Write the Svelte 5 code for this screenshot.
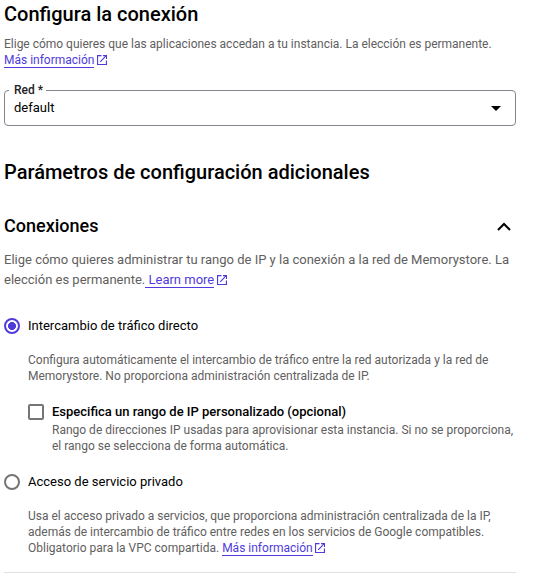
<script>
  const more = 'Más información';
</script>

{#snippet ext()}
  <svg class="ext" viewBox="0 0 10 10" width="10" height="10" fill="none" stroke="currentColor" stroke-width="1.15"><path d="M4.5 .55H.55V9.45H9.45V5.5M6 .55H9.45V4M9.3 .7L3.2 6.8" /></svg>
{/snippet}

<main>
  <h1>Configura la conexión</h1>
  <p class="small intro">Elige cómo quieres que las aplicaciones accedan a tu instancia. La elección es permanente.<br /><a href="#info">{more}</a>{@render ext()}</p>
  <div class="select">
    <span class="label">Red *</span>
    <span>default</span>
    <svg width="10" height="5" viewBox="0 0 10 5"><path d="M0 0H10L5 5Z" /></svg>
  </div>
  <h1 class="params">Parámetros de configuración adicionales</h1>
  <div class="section">
    <h2>Conexiones</h2>
    <svg width="14" height="9" viewBox="0 0 14 9" fill="none" stroke="#000" stroke-width="2"><path d="M1 8L7 2L13 8" /></svg>
  </div>
  <p class="desc">Elige cómo quieres administrar tu rango de IP y la conexión a la red de Memorystore. La<br />elección es permanente.<a href="#learn">&nbsp;Learn more</a>{@render ext()}</p>
  <div class="option first"><span class="radio on"></span><span>Intercambio de tráfico directo</span></div>
  <p class="small detail">Configura automáticamente el intercambio de tráfico entre la red autorizada y la red de<br />Memorystore. No proporciona administración centralizada de IP.</p>
  <div class="check"><span class="box"></span><div>
    <div class="checklabel">Especifica un rango de IP personalizado (opcional)</div>
    <p class="small">Rango de direcciones IP usadas para aprovisionar esta instancia. Si no se proporciona,<br />el rango se selecciona de forma automática.</p>
  </div></div>
  <div class="option second"><span class="radio"></span><span>Acceso de servicio privado</span></div>
  <p class="small detail">Usa el acceso privado a servicios, que proporciona administración centralizada de la IP,<br />además de intercambio de tráfico entre redes en los servicios de Google compatibles.<br />Obligatorio para la VPC compartida. <a href="#vpc">{more}</a>{@render ext()}</p>
  <div class="rule"></div>
</main>

<style>
  :global(body) { margin: 0; background: #fff; }
  main { box-sizing: border-box; height: 580px; padding-left: 4px; overflow: hidden; white-space: nowrap; font: 13px/20px Roboto, sans-serif; color: #000; }
  h1, h2, p { margin: 0; }
  h1 { font-size: 20px; line-height: 28px; font-weight: 500; }
  .small { font-size: 12px; line-height: 16px; color: #5f6060; }
  .intro { padding-top: 8px; letter-spacing: -0.008px; }
  a { color: #4f3bdc; text-decoration: none; border-bottom: 1px solid currentColor; }
  .ext { margin-left: 3px; color: #4f3bdc; vertical-align: -1px; }
  .detail .ext { margin-left: 2px; }
  .select { position: relative; display: flex; align-items: center; justify-content: space-between; box-sizing: border-box; width: 512px; height: 36px; margin-top: 22px; padding: 0 14px 0 9px; border: 1px solid #80868b; border-radius: 4px; }
  .label { position: absolute; left: 4px; top: -8px; padding: 0 3px 0 5px; background: #fff; font-size: 12px; line-height: 14px; font-weight: 500; color: #222; }
  .params { margin-top: 32px; }
  .section { display: flex; align-items: center; justify-content: space-between; width: 507px; height: 28px; margin-top: 26px; }
  h2 { font-size: 18px; font-weight: 500; line-height: 28px; }
  .desc { margin-top: 10px; color: #5f6060; }
  .option { display: flex; align-items: center; gap: 8px; }
  .first { margin-top: 26px; }
  .radio { box-sizing: border-box; width: 16px; height: 16px; border: 2px solid #757575; border-radius: 50%; }
  .on { border-color: #4f3bdc; background: radial-gradient(circle, #4f3bdc 3.7px, transparent 4.3px); }
  .detail { margin: 16px 0 0 24px; }
  .check { display: flex; gap: 8px; margin: 19px 0 0 24px; }
  .box { box-sizing: border-box; width: 16px; height: 16px; margin-top: 1px; border: 2px solid #757575; border-radius: 2px; }
  .checklabel { line-height: 18px; padding-bottom: 1px; font-weight: 500; }
  .second { margin-top: 18px; }
  .rule { width: 512px; height: 1px; margin-top: 16px; background: #e0e0e0; }
</style>
